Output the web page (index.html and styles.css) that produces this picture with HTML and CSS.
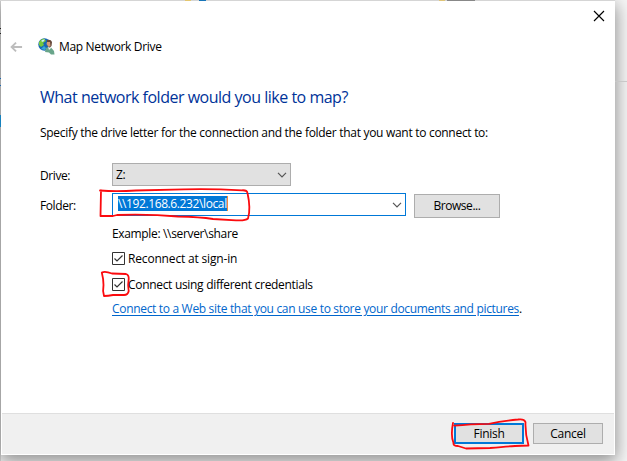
FILE: index.html
```html
<!DOCTYPE html>
<html lang="en">
<head>
<meta charset="utf-8">
<title>Map Network Drive</title>
<link rel="stylesheet" href="styles.css">
</head>
<body>
<div class="desktop">
  <i class="bit bit-a"></i><i class="bit bit-b"></i><i class="bit bit-c"></i><i class="bit bit-d"></i><i class="bit bit-e"></i><i class="bit bit-f"></i><i class="bit bit-g"></i><i class="bit bit-h"></i><i class="bit bit-i"></i>
  <main class="dialog">
    <div class="caption">
      <svg class="close" viewBox="0 0 12 12"><path d="M1 1L11 11M11 1L1 11"/></svg>
    </div>
    <header class="title">
      <svg class="back" viewBox="0 0 14 12"><path d="M13 6H2M6.500 1.200L1.700 6L6.500 10.800"/></svg>
      <svg class="globe" viewBox="0 0 17 17">
        <circle cx="6.500" cy="6.500" r="6.200" fill="#1767b5"/>
        <path d="M1 4Q3 1 6 .6L8 3L5 5L6 7L3 9L1 7Z" fill="#75c83c"/>
        <path d="M3 3Q4.500 1 7 1.500L5 4Z" fill="#d4eefb"/>
        <path d="M6 8L8 10L7 12L3 11Z" fill="#39a9dc"/>
        <path d="M9 2Q13 1 14 4L13.500 8L11 10L9 7Z" fill="#64483b"/>
        <path d="M9 4L12 4L12.500 8L10.500 9L8.500 6Z" fill="#d69b77"/>
        <path d="M7 14L8 10L10 9L11 11L13 9.500L16 13L16.500 16.500L13 16.500L11 14.500Z" fill="#69a58a"/>
        <path d="M10 9L11 12L13 10" fill="#f1f5ed"/>
      </svg>
      <span class="name">Map Network Drive</span>
    </header>
    <h1>What network folder would you like to map?</h1>
    <p class="intro">Specify the drive letter for the connection and the folder that you want to connect to:</p>
    <section class="form">
      <div class="row drive">
        <label>Drive:</label>
        <div class="combo select"><span>Z:</span><svg class="chevron" viewBox="0 0 10 6"><path d="M1 .8L5 4.800L9 .8"/></svg></div>
      </div>
      <div class="row folder">
        <label>Folder:</label>
        <div class="combo input"><span class="selected">\\192.168.6.232\local</span><svg class="chevron" viewBox="0 0 10 6"><path d="M1 .8L5 4.800L9 .8"/></svg></div>
        <button class="browse">Browse...</button>
      </div>
      <div class="options">
        <p class="example">Example: \\server\share</p>
        <div class="check"><svg class="box" viewBox="0 0 13 13"><path class="frame" d="M.5 .5H12.500V12.500H.5Z"/><path d="M2.500 6.500L5 9L10.500 3.500"/></svg><span class="reconnect">Reconnect at sign-in</span></div>
        <div class="check second"><svg class="box" viewBox="0 0 13 13"><path class="frame" d="M.5 .5H12.500V12.500H.5Z"/><path d="M2.500 6.500L5 9L10.500 3.500"/></svg><span>Connect using different credentials</span></div>
        <p class="link"><a>Connect to a Web site that you can use to store your documents and pictures</a>.</p>
      </div>
    </section>
    <footer>
      <button class="finish">Finish</button>
      <button>Cancel</button>
    </footer>
  </main>
  <svg class="marks" viewBox="0 0 627 461">
    <path d="M101 190.500L100.500 216L113 216L117 215Q150 214 178 216.500Q200 217 213 219L236 220.300Q245 221 248 218.500Q251 209 247.500 193Q247 190 242 190.300Q210 188.500 184 189.300L136 190.500Q116 191.700 100 190.500"/>
    <path d="M102 272.500Q105 271 112 273.500L126 274Q129 275 128.700 279Q127.500 286 128.700 291Q128 295 124 295L113 295Q108 296 104 296Q102.500 291 103.500 285Q103.500 279 101.800 272.500"/>
    <path d="M453 423Q450.500 436 453.500 443Q453 446 458 446L466 448.500L490 448Q506 446.500 515 446L528.500 445.500Q525 433 525.500 422Q524 418.500 518 419.500Q502 421 489 423.800Q470 424 454.500 425.700"/>
  </svg>
</div>
</body>
</html>
```
FILE: styles.css
```css
* { box-sizing: border-box; }
body { margin: 0; font: 12px/16px "Open Sans", "Noto Sans", sans-serif; letter-spacing: -.31px; color: #000; }
h1, p { margin: 0; font-weight: 400; white-space: nowrap; }
svg { display: block; fill: none; flex: none; }
span { white-space: nowrap; }
.desktop { position: relative; width: 627px; height: 461px; padding: 1px 0 0 1px; overflow: hidden; background: linear-gradient(90deg, #d5d5d5 0 1px, #f5f5f5 1px); }
.dialog { display: flex; flex-direction: column; width: 614px; height: 454px; background: #fff; border: 1px solid #fff; box-shadow: 0 5px 16px 1px rgba(0,0,0,.42); position: relative; }
.bit { position: absolute; height: 1px; z-index: 1; }
.bit-a { left: 0; top: 0; width: 615px; background: #d5d5d5; }
.bit-b { left: 185px; top: 0; width: 6px; background: #e4c66e; }
.bit-c { left: 199px; top: 0; width: 7px; background: #1674b8; }
.bit-d { left: 439px; top: 0; width: 6px; background: #dfc477; }
.bit-e { left: 447px; top: 0; width: 28px; background: #888; }
.bit-f { left: 615px; top: 81px; width: 12px; background: #c8c8c8; }
.bit-g { left: 0; top: 115px; width: 1px; height: 12px; background: #1681bd; }
.bit-h { left: 0; top: 28px; width: 1px; height: 6px; border: solid #222; border-width: 1px 0; }
.bit-i { left: 0; top: 78px; width: 1px; height: 8px; border: solid #1769b5; border-width: 1px 0; }
.caption { height: 29px; display: flex; justify-content: flex-end; padding: 8px 9px 0 0; }
.close { width: 12px; height: 12px; stroke: #000; stroke-width: 1.15; }
.title { display: flex; align-items: center; height: 31px; padding-left: 8px; }
.back { width: 13px; height: 12px; stroke: #bdbdbd; stroke-width: 2; margin-right: 15px; }
.globe { width: 17px; height: 17px; margin-right: 4px; }
.name { letter-spacing: -.33px; padding-top: 1px; }
h1 { height: 44px; padding: 13px 0 0 38px; font-size: 16px; line-height: 44px; letter-spacing: -.49px; color: #003399; }
.intro { height: 57px; padding: 19px 0 0 38px; letter-spacing: -.295px; }
.form { padding: 0 0 0 38px; }
.row { display: flex; height: 23px; }
.row label { width: 72px; padding-top: 5px; letter-spacing: -.4px; }
.drive { margin-bottom: 7px; }
.combo { display: flex; align-items: center; height: 23px; padding: 0 3px; }
.chevron { width: 10px; height: 6px; stroke: #555; stroke-width: 1.2; margin-left: auto; }
.select { width: 179px; background: #e1e1e1; border: 1px solid #adadad; }
.input { width: 294px; border: 1px solid #0078d7; padding-left: 5px; }
.selected { height: 15px; line-height: 15px; width: 110px; background: #0078d7; color: #fff; border-right: 1px solid #f08a38; margin-bottom: 2px; letter-spacing: -.39px; }
button { width: 70px; height: 21px; padding: 0; border: 1px solid #adadad; background: #e1e1e1; font: inherit; letter-spacing: -.3px; color: inherit; }
.browse { width: 86px; height: 24px; margin: 1px 0 0 8px; letter-spacing: -.45px; }
.options { padding-left: 72px; }
.example { margin-top: 10px; height: 23px; letter-spacing: -.34px; }
.check { display: flex; align-items: center; gap: 3px; height: 19px; }
.reconnect { letter-spacing: -.17px; }
.second { margin-top: 7px; }
.box { width: 13px; height: 13px; stroke: #333; stroke-width: 1.2; }
.frame { stroke-width: 1; }
.link { margin-top: 7px; letter-spacing: -.32px; }
.link a { color: #0066cc; text-decoration: underline; text-underline-offset: 2px; }
footer { margin-top: auto; height: 41px; border-top: 1px solid #dfdfdf; background: #f0f0f0; display: flex; justify-content: flex-end; gap: 9px; padding: 9px 11px 0 0; }
footer .finish { border: 2px solid #0078d7; }
.marks { position: absolute; left: 0; top: 0; width: 627px; height: 461px; z-index: 2; stroke: #fb0a0e; stroke-width: 1.8; stroke-linejoin: round; stroke-linecap: round; pointer-events: none; }
```
